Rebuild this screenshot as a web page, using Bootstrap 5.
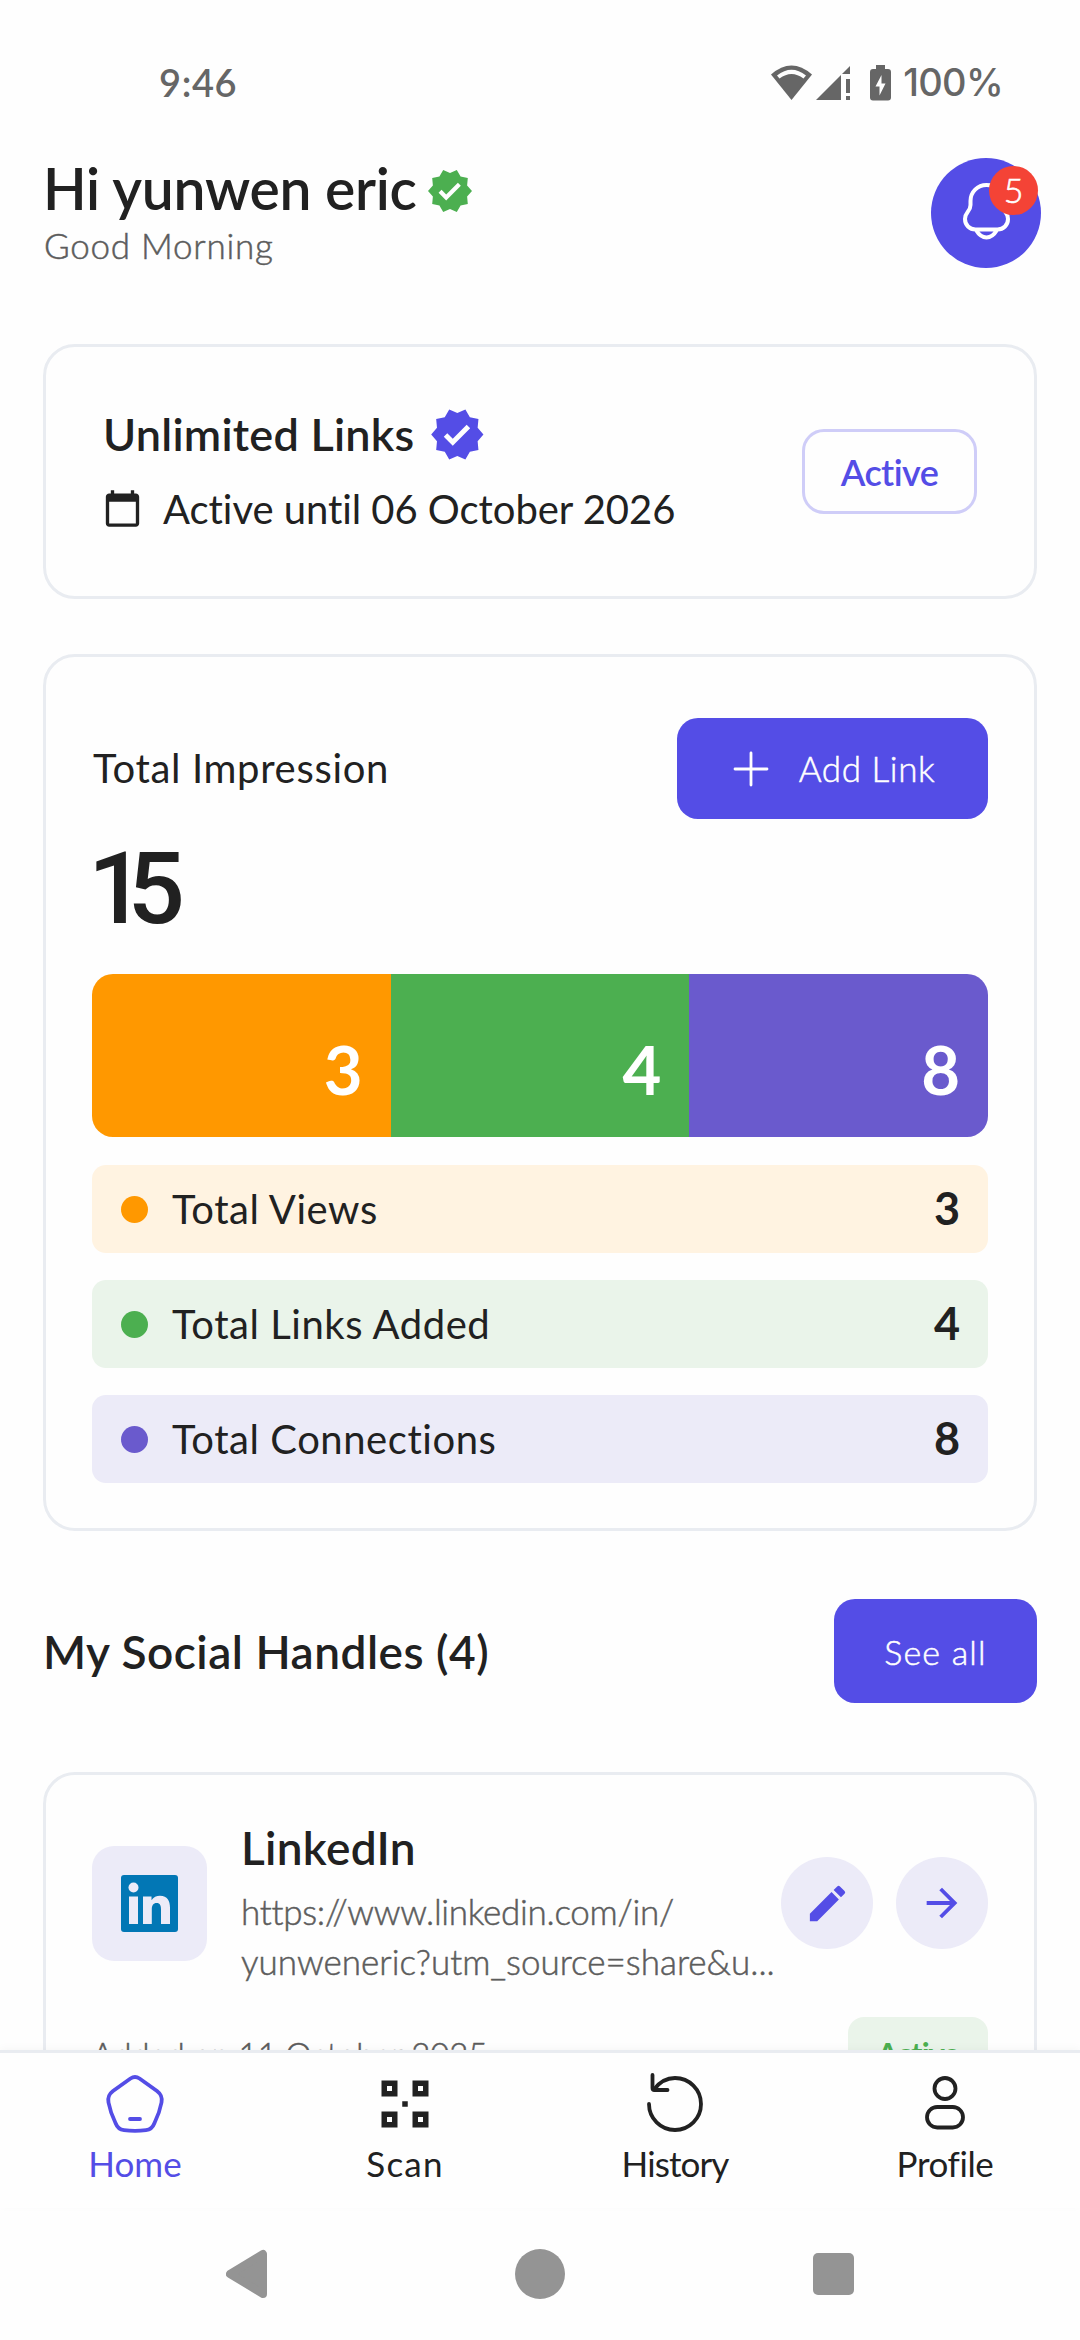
<!DOCTYPE html>
<html lang="en">
<head>
<meta charset="utf-8">
<meta name="viewport" content="width=device-width, initial-scale=1">
<title>Home</title>
<link href="https://cdn.jsdelivr.net/npm/bootstrap@5.3.0/dist/css/bootstrap.min.css" rel="stylesheet">
<style>
:root{--brand:#544de6;--ink:#212121;--line:#e9ecf1;--tint:#ecebf8}
body{font-family:Lato,"Liberation Sans",sans-serif;color:var(--ink);background:#fefefe;width:1080px;height:2340px;overflow:hidden}
svg{display:block;flex:none}
.screen{height:2050px}
.statusbar{height:142px;padding:23px 77px 0 159px;color:#666;font-size:38px;font-weight:600;letter-spacing:.6px}
.statusbar .pct{font-family:Inter,sans-serif;font-weight:500;font-size:38px;letter-spacing:-.7px;margin-left:11px}
.page{padding:0 43px}
.hello{height:142px;padding-top:16px}
.hello-name{font-size:57px;font-weight:600;line-height:60px;letter-spacing:-.3px;gap:9px}
.hello-name svg{margin-top:5px}
.hello-sub{font-size:35px;font-weight:300;line-height:54px;letter-spacing:.75px;color:#5c5c5c;padding-left:1px}
.hello-sub,.action,.handle-url,.added{-webkit-text-stroke:.5px currentColor}
.bell{width:110px;height:110px;background:var(--brand);margin-right:-4px}
.bell-count{position:absolute;left:58px;top:8px;width:49px;height:49px;background:#f44336;color:#fff;font-size:34px;line-height:48px;font-weight:300;-webkit-text-stroke:.6px #fff}
.panel{border:3px solid var(--line);border-radius:32px;background:#fefefe}
.plan{height:255px;margin-top:60px;padding:0 57px 0 57px}
.plan-name{font-size:45px;font-weight:600;line-height:54px;letter-spacing:.23px;gap:16px}
.plan-date{font-size:40px;line-height:56px;letter-spacing:-.05px;margin-top:19px;gap:18px}
.plan-date svg{margin-left:2px}
.plan-pill{width:175px;height:85px;border:3px solid #cfcdf8;border-radius:22px;color:var(--brand);font-size:36px;font-weight:600;letter-spacing:-.6px}
.stats{height:877px;margin-top:55px;padding:61px 46px 0}
.stats-head{height:101px;font-size:40px;letter-spacing:.67px}
.stats-head>span:first-child{padding-left:1px;margin-top:-2px}
.action{background:var(--brand);color:#fff;border-radius:21px;font-weight:300}
.add-btn{width:311px;height:101px;font-size:35px;letter-spacing:.55px;gap:30px;padding-left:3px}
.total{font-family:Roboto,"Liberation Sans",sans-serif;font-size:101px;font-weight:500;line-height:140px;letter-spacing:-18px;height:140px;margin-left:-4px}
.bars{height:163px;margin-top:15px;border-radius:21px;overflow:hidden;color:#fff;font-size:67px;font-weight:700}
.bars>div{flex:1;text-align:right;padding:55px 28px 0 0;line-height:80px}
.c-or{background:#ff9800}.c-gr{background:#4caf50}.c-pu{background:#6a5acd}
.legend{height:88px;border-radius:14px;padding:0 28px 0 29px;font-size:40px;letter-spacing:.55px}
.legend b{font-size:45px;font-weight:700;letter-spacing:0}
.legend .dot{width:27px;height:27px;margin-right:24px}
.l-or{background:#fff3e1}.l-gr{background:#eaf4ea}.l-pu{background:var(--tint)}
.legends{margin-top:28px;gap:27px}
.social-head{height:104px;margin-top:68px;font-size:46px;font-weight:600;letter-spacing:.5px}
.see-btn{width:203px;height:104px;font-size:34px;letter-spacing:1.2px}
.handle{margin-top:69px;height:420px;padding:45px 46px 0}
.avatar{width:115px;height:115px;border-radius:22px;background:var(--tint)}
.handle-name{font-size:46px;font-weight:600;line-height:56px;letter-spacing:.3px}
.handle-url{font-size:35px;font-weight:300;line-height:50px;color:#5c5c5c;margin-top:10px;white-space:nowrap}
.handle-text{margin-left:34px;width:537px}
.round{width:92px;height:92px;background:var(--tint)}
.added{font-size:33px;font-weight:300;letter-spacing:-.1px;color:#5c5c5c}
.live{width:140px;height:75px;border-radius:16px;background:#eaf4ea;color:#4caf50;font-size:31px;font-weight:700;letter-spacing:-1px;padding-bottom:3px}
.tabs{height:158px;border-top:3px solid var(--line);background:#fefefe;box-shadow:0 -2px 8px rgba(0,0,0,.03);position:relative}
.tab{flex:1;font-size:35px;line-height:50px;padding-top:20px}
.tab svg{margin-bottom:3px}
.sysbar{height:132px;background:#fefefe;padding:0 226px;color:#949494}
</style>
</head>
<body>
<main class="screen overflow-hidden">
  <div class="statusbar d-flex align-items-center justify-content-between">
    <span>9:46</span>
    <div class="d-flex align-items-center">
      <svg width="121" height="38" viewBox="771 64 121 38" fill="#666"><path d="M771 74.500Q791.500 56.500 812 74.500L791.500 100Z"/><path d="M777 75.500Q791.500 64 806 75.500L803.500 78.500Q791.500 69.500 779.500 78.500Z" fill="#fefefe"/><path d="M816 100L841 75V100ZM842 74L850 66V74ZM846 79h4v14h-4zM846 96h4v4h-4z"/><path d="M876 65h9v4h3q3 0 3 3v25.500q0 3-3 3h-15q-3 0-3-3V72q0-3 3-3h3z"/><path d="M881.500 75l-6 11.500h4v9l6-12h-4z" fill="#fefefe"/></svg>
      <span class="pct">100%</span>
    </div>
  </div>
  <div class="page">
    <header class="hello d-flex justify-content-between align-items-start">
      <div>
        <div class="hello-name d-flex align-items-center">Hi yunwen eric
          <svg width="48" height="48" viewBox="0 0 24 24" fill="#4caf50"><path d="M23 12l-2.440-2.790.34-3.690-3.610-.82-1.890-3.200L12 2.960 8.600 1.500 6.710 4.690 3.100 5.500l.34 3.700L1 12l2.440 2.790-.34 3.700 3.610.82L8.600 22.500l3.400-1.470 3.400 1.460 1.890-3.190 3.610-.82-.34-3.690L23 12zm-12.910 4.720l-3.800-3.810 1.480-1.480 2.320 2.330 5.850-5.870 1.480 1.480-7.330 7.350z"/></svg>
        </div>
        <div class="hello-sub">Good Morning</div>
      </div>
      <div class="bell rounded-circle position-relative">
        <svg width="110" height="110" viewBox="931 158 110 110" fill="none" stroke="#fff" stroke-width="4" stroke-linejoin="round"><path d="M986.500 185c-9 0-16 7-16 16v4c0 7-5.500 6.500-5.500 14 0 6 4.500 10.500 10.500 10.500h22c6 0 10.500-4.500 10.500-10.500 0-7.500-5.500-7-5.500-14v-4c0-9-7-16-16-16zM976 230c3 5 6 7.500 10.500 7.500s7.500-2.500 10.500-7.500"/></svg>
        <span class="bell-count rounded-circle text-center">5</span>
      </div>
    </header>

    <section class="panel plan d-flex align-items-center justify-content-between">
      <div>
        <div class="plan-name d-flex align-items-center">Unlimited Links
          <svg width="57" height="57" viewBox="0.500 0 24 24" fill="#544de6" style="margin:-1px 0"><path d="M23 12l-2.440-2.790.34-3.690-3.610-.82-1.890-3.200L12 2.960 8.600 1.500 6.710 4.690 3.100 5.500l.34 3.700L1 12l2.440 2.790-.34 3.700 3.610.82L8.600 22.500l3.400-1.470 3.400 1.460 1.890-3.190 3.610-.82-.34-3.690L23 12zm-12.910 4.720l-3.800-3.810 1.480-1.480 2.320 2.330 5.850-5.870 1.480 1.480-7.330 7.350z"/></svg>
        </div>
        <div class="plan-date d-flex align-items-center">
          <svg width="40" height="41" viewBox="1.500 0 24 24" fill="#212121"><path d="M20 3h-1V1h-2v2H7V1H5v2H4c-1.100 0-2 .9-2 2v16c0 1.100.9 2 2 2h16c1.100 0 2-.9 2-2V5c0-1.100-.9-2-2-2zm0 18H4V8h16v13z"/></svg>
          Active until 06 October 2026
        </div>
      </div>
      <span class="plan-pill d-flex align-items-center justify-content-center">Active</span>
    </section>

    <section class="panel stats">
      <div class="stats-head d-flex align-items-center justify-content-between">
        <span>Total Impression</span>
        <span class="action add-btn d-flex align-items-center justify-content-center">
          <svg width="36" height="36" viewBox="0 0 36 36" stroke="#fff" stroke-width="2.800" stroke-linecap="round"><path d="M18 2v32M2 18h32"/></svg>Add Link</span>
      </div>
      <div class="total">15</div>
      <div class="bars d-flex"><div class="c-or">3</div><div class="c-gr">4</div><div class="c-pu">8</div></div>
      <div class="legends d-flex flex-column">
        <div class="legend l-or d-flex align-items-center"><span class="dot c-or rounded-circle"></span>Total Views<b class="ms-auto">3</b></div>
        <div class="legend l-gr d-flex align-items-center"><span class="dot c-gr rounded-circle"></span>Total Links Added<b class="ms-auto">4</b></div>
        <div class="legend l-pu d-flex align-items-center"><span class="dot c-pu rounded-circle"></span>Total Connections<b class="ms-auto">8</b></div>
      </div>
    </section>

    <div class="social-head d-flex align-items-center justify-content-between">
      <span>My Social Handles (4)</span>
      <span class="action see-btn d-flex align-items-center justify-content-center">See all</span>
    </div>

    <section class="panel handle">
      <div class="d-flex align-items-center">
        <div class="avatar d-flex align-items-center justify-content-center">
          <svg width="57" height="57" viewBox="0 0 57 57"><rect width="57" height="57" rx="3" fill="#0277b5"/><g fill="#ecebf8"><circle cx="12.500" cy="12.500" r="5"/><path d="M8 21.500h9V49H8zM22 21.500h8.500v3.800c2-3.200 5-4.600 8.500-4.600 7.500 0 10 5 10 12V49h-9V34.500c0-4-1-6.500-4.300-6.500-3.500 0-4.900 2.600-4.900 6.500V49H22z"/></g></svg>
        </div>
        <div class="handle-text">
          <div class="handle-name">LinkedIn</div>
          <div class="handle-url"><span style="letter-spacing:-.28px">https://www.linkedin.com/in/</span><br>yunweneric?utm_source=share&amp;u...</div>
        </div>
        <div class="d-flex ms-auto" style="gap:23px">
          <span class="round rounded-circle d-flex align-items-center justify-content-center"><svg width="47" height="47" viewBox="0 0 24 24" fill="#544de6"><path d="M3 17.250V21h3.750L17.810 9.940l-3.750-3.750L3 17.250zM20.710 7.040a1 1 0 0 0 0-1.410l-2.340-2.340a1 1 0 0 0-1.410 0l-1.830 1.830 3.750 3.750 1.830-1.830z"/></svg></span>
          <span class="round rounded-circle d-flex align-items-center justify-content-center"><svg width="46" height="46" viewBox="0 0 24 24" fill="#544de6"><path d="M12 4l-1.410 1.410L16.170 11H4v2h12.170l-5.580 5.590L12 20l8-8z"/></svg></span>
        </div>
      </div>
      <div class="d-flex align-items-center justify-content-between" style="margin-top:31px">
        <span class="added">Added on 11 October 2025</span>
        <span class="live d-flex align-items-center justify-content-center">Active</span>
      </div>
    </section>
  </div>
</main>

<nav class="tabs d-flex">
  <div class="tab d-flex flex-column align-items-center" style="color:var(--brand)">
    <svg width="62" height="62" viewBox="0 0 62 62" fill="none" stroke="currentColor" stroke-width="3.800" stroke-linecap="round" stroke-linejoin="round"><path d="M26.500 5.500Q31 2.500 35.500 5.500L53 18Q59 22.500 57.500 29.500Q55.500 40 50.500 50Q48 56.500 42 57.200Q31 58.400 20 57.200Q14 56.500 11.500 50Q6.500 40 4.500 29.500Q3 22.500 9 18Z"/><path d="M26 46h10"/></svg>
    Home</div>
  <div class="tab d-flex flex-column align-items-center">
    <svg width="62" height="62" viewBox="0 0 62 62"><g fill="none" stroke="#212121" stroke-width="5.500"><path d="M10.250 10.250h10.500v10.500h-10.500zM41.250 10.250h10.500v10.500h-10.500zM10.250 41.250h10.500v10.500h-10.500zM41.250 41.250h10.500v10.500h-10.500z"/></g><path d="M28.250 28.250h5.500v5.500h-5.500z" fill="#212121"/></svg>
    <span style="letter-spacing:1.2px">Scan</span></div>
  <div class="tab d-flex flex-column align-items-center">
    <svg width="62" height="62" viewBox="0 0 62 62" fill="none" stroke="#212121" stroke-width="3.800" stroke-linecap="round" stroke-linejoin="round"><path d="M5 31A26 26 0 1 0 31 5Q18.500 5 10 16.500"/><path d="M8.500 2v13q0 2 2 2h13"/></svg>
    <span style="letter-spacing:-.9px">History</span></div>
  <div class="tab d-flex flex-column align-items-center">
    <svg width="62" height="62" viewBox="0 0 62 62" fill="none" stroke="#212121" stroke-width="3.800"><circle cx="31" cy="15.500" r="10.500"/><rect x="13" y="34" width="36" height="20.500" rx="10.250"/></svg>
    <span style="letter-spacing:-.4px">Profile</span></div>
</nav>
<div class="sysbar d-flex align-items-center justify-content-between">
  <svg width="41" height="50" viewBox="0 0 41 50"><path d="M4 25L37 5v40z" fill="currentColor" stroke="currentColor" stroke-width="8" stroke-linejoin="round"/></svg>
  <svg width="52" height="52" viewBox="0 0 52 52"><circle cx="26" cy="26" r="25" fill="currentColor"/></svg>
  <svg width="41" height="42" viewBox="0 0 41 42"><rect width="41" height="42" rx="5" fill="currentColor"/></svg>
</div>
<script src="https://cdn.jsdelivr.net/npm/bootstrap@5.3.0/dist/js/bootstrap.bundle.min.js"></script>
</body>
</html>
